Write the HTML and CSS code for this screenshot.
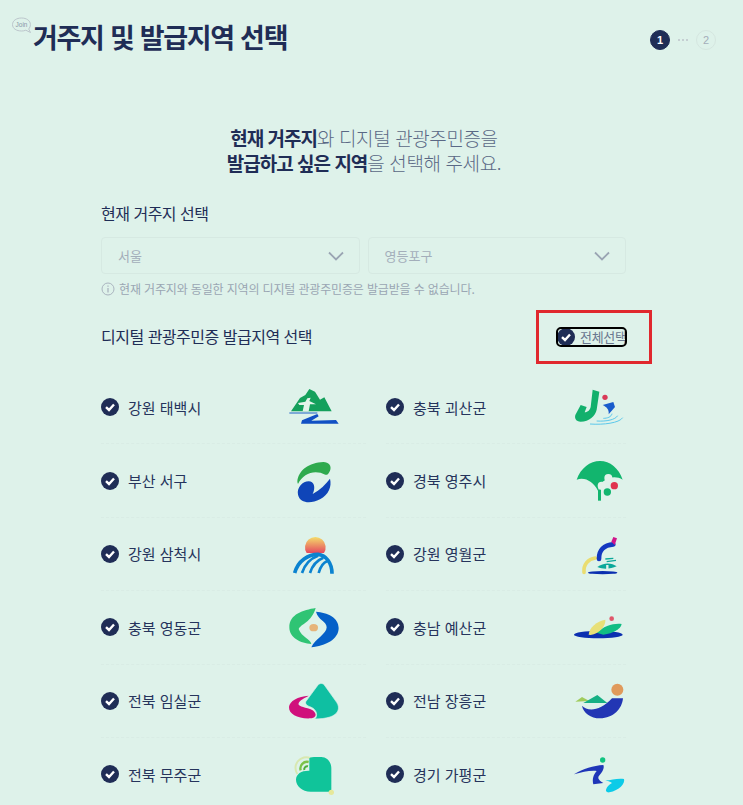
FILE: index.html
```html
<!DOCTYPE html>
<html lang="ko">
<head>
<meta charset="utf-8">
<title>거주지 및 발급지역 선택</title>
<link rel="stylesheet" href="styles.css">
</head>
<body>
<header class="top">
  <div class="title-wrap">
    <svg class="join" viewBox="0 0 22 18" width="22" height="18"><path d="M10.5 1C5.5 1 1.5 3.6 1.5 7.6S5.5 14 10.5 14c1.6 0 3-.2 4.300-.8l4.700 2.300-1.800-3.500c1-1.200 1.700-2.600 1.700-4.400C19.400 3.600 15.500 1 10.500 1Z" fill="none" stroke="#bcc6cc" stroke-width="1"/><text x="10.500" y="9.800" text-anchor="middle" class="join-text">Join</text></svg>
    <h1 class="title">거주지 및 발급지역 선택</h1>
  </div>
  <div class="steps">
    <span class="step on">1</span>
    <span class="step-dots"><i></i><i></i><i></i></span>
    <span class="step">2</span>
  </div>
</header>

<p class="lead"><b>현재 거주지</b>와 디지털 관광주민증을<br><b>발급하고 싶은 지역</b>을 선택해 주세요.</p>

<main class="form">
  <h2 class="sec-title sec-first">현재 거주지 선택</h2>
  <div class="selects">
    <div class="select"><span>서울</span><svg viewBox="0 0 16 10" width="16" height="10"><path d="M1 1.500 8 8.500 15 1.500" fill="none" stroke="#9aa5b3" stroke-width="1.800"/></svg></div>
    <div class="select"><span>영등포구</span><svg viewBox="0 0 16 10" width="16" height="10"><path d="M1 1.500 8 8.500 15 1.500" fill="none" stroke="#9aa5b3" stroke-width="1.800"/></svg></div>
  </div>
  <p class="info"><svg viewBox="0 0 14 14" width="14" height="14"><circle cx="7" cy="7" r="6" fill="none" stroke="#aab4bf" stroke-width="1"/><path d="M7 6v4.500M7 3.400v1.300" stroke="#aab4bf" stroke-width="1.300"/></svg>현재 거주지와 동일한 지역의 디지털 관광주민증은 발급받을 수 없습니다.</p>

  <div class="sec-row">
    <h2 class="sec-title">디지털 관광주민증 발급지역 선택</h2>
    <div class="all-wrap">
      <label class="all"><svg class="chk chk-all" viewBox="0 0 18 18" width="18" height="18"><circle cx="9" cy="9" r="9" fill="#1f2d56"/><path d="M5 9.200 8 12l5-5.500" fill="none" stroke="#fff" stroke-width="2.400"/></svg><span>전체선택</span></label>
      <div class="annot"></div>
    </div>
  </div>

  <ul class="grid">
    <li class="item"><svg class="chk" viewBox="0 0 18 18" width="18" height="18"><circle cx="9" cy="9" r="9" fill="#1f2d56"/><path d="M5 9.200 8 12l5-5.500" fill="none" stroke="#fff" stroke-width="2.400"/></svg><span class="name">강원 태백시</span>
      <svg class="logo" viewBox="54 6 156 156"><path d="M63 97 90 57 106 48 118 30 135 38 150 62 163 55 185 97Z" fill="#14a05c"/><path d="M84 72 106 68 112 58 122 56 118 66 138 76 120 76 116 97 98 97 102 78 88 78Z" fill="#e4f3ea"/><path d="M58 102H142" stroke="#1f63c4" stroke-width="3"/><path d="M142 105 96 124 93 134H206L198 123 124 125 146 112Z" fill="#1150c4"/></svg></li>
    <li class="item"><svg class="chk" viewBox="0 0 18 18" width="18" height="18"><circle cx="9" cy="9" r="9" fill="#1f2d56"/><path d="M5 9.200 8 12l5-5.500" fill="none" stroke="#fff" stroke-width="2.400"/></svg><span class="name">충북 괴산군</span>
      <svg class="logo" viewBox="72 6 156 156"><path d="M128 32 148 38 140 92C136 110 118 128 92 128 78 128 73 118 76 108L92 78 110 84 104 100C114 100 120 92 122 84Z" fill="#12b06c"/><circle cx="165" cy="55" r="8" fill="#d93a58"/><path d="M158 78 190 69 195 84 176 106C178 92 170 84 158 78Z" fill="#1a5ccc"/><path d="M120 135C160 138 208 132 218 116 M140 126C170 128 196 122 203 110M160 118C172 118 184 114 186 104" fill="none" stroke="#5cc8ea" stroke-width="3"/></svg></li>
    <li class="item"><svg class="chk" viewBox="0 0 18 18" width="18" height="18"><circle cx="9" cy="9" r="9" fill="#1f2d56"/><path d="M5 9.200 8 12l5-5.500" fill="none" stroke="#fff" stroke-width="2.400"/></svg><span class="name">부산 서구</span>
      <svg class="logo" viewBox="54 225 156 156"><path d="M82 306C84 270 118 248 160 246 176 246 186 258 180 272 176 282 170 286 166 284 136 268 100 278 84 312Z" fill="#2eaa4e"/><path d="M84 344C80 322 98 304 116 304 132 304 138 322 128 342 150 330 168 312 180 296 186 320 176 344 150 358 122 372 90 370 84 344Z" fill="#0f45b8"/></svg></li>
    <li class="item"><svg class="chk" viewBox="0 0 18 18" width="18" height="18"><circle cx="9" cy="9" r="9" fill="#1f2d56"/><path d="M5 9.200 8 12l5-5.500" fill="none" stroke="#fff" stroke-width="2.400"/></svg><span class="name">경북 영주시</span>
      <svg class="logo" viewBox="72 225 156 156"><path d="M80 299C92 264 120 243 150 243 180 243 206 264 218 299 200 288 178 290 160 304 152 310 146 320 144 332 130 306 106 290 80 299Z" fill="#12b56e"/><rect x="144" y="328" width="9" height="34" fill="#12b56e"/><circle cx="175" cy="294" r="12" fill="#e2f2ea"/><circle cx="155" cy="317" r="12" fill="#e2f2ea"/><circle cx="193" cy="317" r="11" fill="#e0334e"/><circle cx="172" cy="336" r="11" fill="#12b56e"/></svg></li>
    <li class="item"><svg class="chk" viewBox="0 0 18 18" width="18" height="18"><circle cx="9" cy="9" r="9" fill="#1f2d56"/><path d="M5 9.200 8 12l5-5.500" fill="none" stroke="#fff" stroke-width="2.400"/></svg><span class="name">강원 삼척시</span>
      <svg class="logo" viewBox="54 9 156 156"><defs><linearGradient id="sun" x1="0" y1="0" x2="0" y2="1"><stop offset="0" stop-color="#f4dc6a"/><stop offset="1" stop-color="#e5485e"/></linearGradient></defs><path d="M110 84A31 31 0 1 1 162 84Z" fill="url(#sun)"/><path d="M74 144C84 106 116 88 144 88 168 90 186 114 186 146" fill="none" stroke="#0b83d0" stroke-width="11"/><path d="M96 144C104 118 122 100 144 92M120 144C126 124 140 106 160 98M146 144C150 128 158 114 172 108" fill="none" stroke="#0b83d0" stroke-width="8"/></svg></li>
    <li class="item"><svg class="chk" viewBox="0 0 18 18" width="18" height="18"><circle cx="9" cy="9" r="9" fill="#1f2d56"/><path d="M5 9.200 8 12l5-5.500" fill="none" stroke="#fff" stroke-width="2.400"/></svg><span class="name">강원 영월군</span>
      <svg class="logo" viewBox="72 9 156 156"><path d="M102 142C100 118 114 102 136 99" fill="none" stroke="#eadd70" stroke-width="11" stroke-linecap="round"/><path d="M147 102C146 76 162 60 190 58" fill="none" stroke="#1438c0" stroke-width="14" stroke-linecap="round"/><path d="M184 50 190 36 201 40 194 60Z" fill="#d0158a"/><path d="M142 126C160 112 185 112 200 124 182 132 160 134 142 126Z" fill="#0ba89a"/><path d="M166 102 190 100M170 110 198 106" stroke="#0ba89a" stroke-width="4"/><path d="M172 120V142" stroke="#e2f2ea" stroke-width="7"/><ellipse cx="158" cy="143" rx="44" ry="5" fill="#0a2fb0"/></svg></li>
    <li class="item"><svg class="chk" viewBox="0 0 18 18" width="18" height="18"><circle cx="9" cy="9" r="9" fill="#1f2d56"/><path d="M5 9.200 8 12l5-5.500" fill="none" stroke="#fff" stroke-width="2.400"/></svg><span class="name">충북 영동군</span>
      <svg class="logo" viewBox="54 231 156 156"><path d="M137 252C100 258 58 270 58 310 58 342 92 358 124 360 122 345 95 340 86 315 92 300 125 295 137 252Z" fill="#2fc474"/><path d="M138 263C172 266 206 280 206 312 206 346 166 366 124 370 135 345 170 330 170 310 170 290 145 290 138 263Z" fill="#0560c8"/><ellipse cx="131" cy="311" rx="13" ry="11" fill="#e6b47a"/></svg></li>
    <li class="item"><svg class="chk" viewBox="0 0 18 18" width="18" height="18"><circle cx="9" cy="9" r="9" fill="#1f2d56"/><path d="M5 9.200 8 12l5-5.500" fill="none" stroke="#fff" stroke-width="2.400"/></svg><span class="name">충남 예산군</span>
      <svg class="logo" viewBox="72 231 156 156"><ellipse cx="145" cy="332" rx="73" ry="11" fill="#0c30b0"/><path d="M140 326C160 306 195 296 215 300 212 316 190 328 160 332Z" fill="#12bd84"/><path d="M116 332C118 310 140 292 166 287 168 306 148 328 122 333Z" fill="#e8e078"/><circle cx="185" cy="284" r="7" fill="#e0566a"/></svg></li>
    <li class="item"><svg class="chk" viewBox="0 0 18 18" width="18" height="18"><circle cx="9" cy="9" r="9" fill="#1f2d56"/><path d="M5 9.200 8 12l5-5.500" fill="none" stroke="#fff" stroke-width="2.400"/></svg><span class="name">전북 임실군</span>
      <svg class="logo" viewBox="54 18 156 156"><path d="M116 80C84 82 58 96 57 114 56 136 84 150 122 148 146 146 138 126 120 120 100 114 82 112 86 102 90 92 104 88 116 80Z" fill="#d0107c"/><path d="M108 97 144 48C150 42 158 42 163 48L200 100C212 118 204 136 180 144 168 148 150 150 134 150 144 142 142 122 122 114 110 110 104 104 108 97Z" fill="#0fbfa2" stroke="#def2ea" stroke-width="2"/></svg></li>
    <li class="item"><svg class="chk" viewBox="0 0 18 18" width="18" height="18"><circle cx="9" cy="9" r="9" fill="#1f2d56"/><path d="M5 9.200 8 12l5-5.500" fill="none" stroke="#fff" stroke-width="2.400"/></svg><span class="name">전남 장흥군</span>
      <svg class="logo" viewBox="72 18 156 156"><circle cx="202" cy="62" r="18" fill="#e09a5c"/><path d="M76 98 96 84 118 96Z" fill="#a0cc5c"/><path d="M100 102 142 78 172 102Z" fill="#16b084"/><path d="M96 110C112 128 150 128 186 88H219C216 120 190 148 150 148 122 148 100 132 96 110Z" fill="#2236b4"/></svg></li>
    <li class="item"><svg class="chk" viewBox="0 0 18 18" width="18" height="18"><circle cx="9" cy="9" r="9" fill="#1f2d56"/><path d="M5 9.200 8 12l5-5.500" fill="none" stroke="#fff" stroke-width="2.400"/></svg><span class="name">전북 무주군</span>
      <svg class="logo" viewBox="54 237 156 156"><path d="M82 315A32 32 0 0 1 122 268" fill="none" stroke="#d8e8b0" stroke-width="6"/><path d="M92 304A20 20 0 0 1 116 279" fill="none" stroke="#7cc24a" stroke-width="7"/><path d="M103 303A9 9 0 0 1 114 292" fill="none" stroke="#4cae3c" stroke-width="6"/><path d="M118 305V268C122 264 128 264 140 264H154C172 264 184 280 184 298V368H122C96 368 78 350 78 332 78 314 96 304 118 305Z" fill="#10c49a"/><circle cx="184" cy="370" r="8" fill="#e6e89a"/></svg></li>
    <li class="item"><svg class="chk" viewBox="0 0 18 18" width="18" height="18"><circle cx="9" cy="9" r="9" fill="#1f2d56"/><path d="M5 9.200 8 12l5-5.500" fill="none" stroke="#fff" stroke-width="2.400"/></svg><span class="name">경기 가평군</span>
      <svg class="logo" viewBox="72 237 156 156"><circle cx="158" cy="273" r="8" fill="#10c480"/><path d="M72 316C100 298 130 290 160 288 164 296 158 308 146 322 142 330 150 336 160 342L130 346C126 330 130 318 140 306 118 304 96 310 72 316Z" fill="#1f36b8"/><path d="M166 334C184 334 204 326 222 330 226 344 208 364 178 370 160 372 168 352 186 342 180 338 172 336 166 334Z" fill="#0ccbe8"/></svg></li>
  </ul>
</main>
</body>
</html>
```
FILE: styles.css
```css
* { box-sizing: border-box; }
html, body { margin: 0; padding: 0; height: 805px; overflow: hidden; }
body {
  background: #def2ea;
  color: #1f2d56;
  font-family: "Noto Sans CJK KR", "Noto Sans", sans-serif;
}
ul, h1, h2, p { margin: 0; padding: 0; }
.top {
  display: flex;
  justify-content: space-between;
  align-items: flex-start;
  padding: 17px 27px 0 11px;
  height: 125px;
}
.title-wrap { display: flex; align-items: flex-start; }
.join { flex: none; }
.join-text { font: 6.500px "Liberation Sans", sans-serif; fill: #8a97a8; }
.title {
  font-size: 27px;
  font-weight: 700;
  letter-spacing: -1.300px;
  line-height: 40px;
}
.steps { display: flex; align-items: center; margin-top: 13px; }
.step {
  width: 20px; height: 20px;
  border-radius: 50%;
  border: 1px solid #d5e6e0;
  font: 11px/18px "Liberation Sans", sans-serif;
  text-align: center;
  color: #a4aeba;
}
.step.on { background: #1f2d56; border-color: #1f2d56; color: #fff; font-weight: 700; }
.step-dots { display: flex; gap: 2px; margin: 0 6px; width: 14px; justify-content: center; }
.step-dots i { width: 2px; height: 2px; background: #c5cfd2; }

.lead {
  text-align: center;
  padding-right: 15px;
  font-size: 19px;
  line-height: 25px;
  font-weight: 300;
  color: #5a6885;
  letter-spacing: -0.400px;
}
.lead b { font-weight: 700; color: #1f2d56; letter-spacing: -1px; }

.form { width: 525px; margin-left: 101px; }
.sec-title { font-size: 16px; font-weight: 400; letter-spacing: -0.500px; line-height: 24px; }
.sec-first { margin-top: 26px; }
.selects { display: flex; gap: 8px; margin-top: 12px; }
.select {
  flex: 1;
  height: 37px;
  border: 1px solid #d6e9e2;
  border-radius: 4px;
  padding: 0 15px 0 16px;
  display: flex;
  align-items: center;
  justify-content: space-between;
  font-size: 13px;
  color: #a3aeba;
}
.info {
  display: flex;
  align-items: center;
  gap: 4px;
  margin-top: 6px;
  font-size: 12px;
  line-height: 18px;
  letter-spacing: -0.150px;
  color: #9aa6b3;
}
.sec-row { display: flex; justify-content: space-between; align-items: center; margin-top: 26px; }
.all-wrap { position: relative; margin-right: 1px; }
.all {
  display: flex;
  align-items: center;
  gap: 5px;
  font-size: 13px;
  letter-spacing: -0.300px;
  line-height: 16px;
  color: #6a7890;
  outline: 2px solid #000;
  border-radius: 3px;
  width: 67px;
  height: 16px;
  white-space: nowrap;
  margin-top: 2px;
}
.chk-all { margin-left: -1px; }
.annot {
  position: absolute;
  left: -22px; top: -17px;
  width: 116px; height: 54px;
  border: 3px solid #e0282e;
}
.chk { flex: none; }
.grid {
  list-style: none;
  display: grid;
  grid-template-columns: 285px 240px;
  grid-auto-rows: 73.400px;
  margin-top: 23px;
}
.item {
  display: flex;
  align-items: center;
  gap: 9px;
  border-bottom: 1px dashed #d9ece5;
  font-size: 15px;
}
.item:nth-child(odd) { margin-right: 20px; padding-right: 26px; }
.name { color: #26345c; }
.logo { width: 52px; height: 52px; margin-left: auto; flex: none; }
```
